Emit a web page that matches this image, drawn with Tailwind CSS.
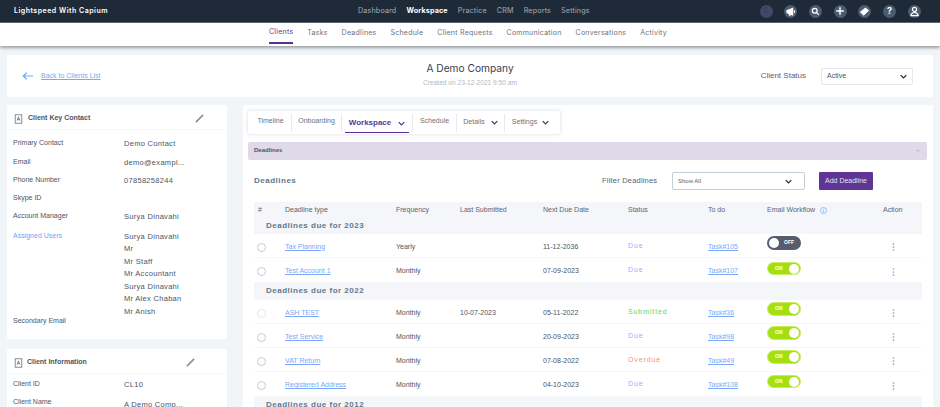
<!DOCTYPE html>
<html lang="en">
<head>
    <meta charset="UTF-8">
    <meta name="viewport" content="width=device-width, initial-scale=1.0">
    <title>Lightspeed With Capium</title>
    <script src="https://cdn.jsdelivr.net/npm/@tailwindcss/browser@4"></script>
</head>
<body class="h-[407px] w-[940px] overflow-hidden bg-[#f1f5f8] font-['Liberation_Sans',sans-serif] text-[7.5px] text-[#4b5563]">
    <!-- top bar -->
    <header class="relative flex h-[23px] items-center border-b border-[#5b6470] bg-[#1f2a38] font-['Inter',sans-serif]">
        <div class="ml-[14px] text-[7px] font-semibold tracking-[0.5px] text-white">Lightspeed With Capium</div>
        <nav class="absolute left-[358px] flex gap-[10px] text-[7.2px] tracking-[0.15px] text-[#a3abb6]">
            <span>Dashboard</span>
            <span class="font-bold text-white">Workspace</span>
            <span>Practice</span>
            <span>CRM</span>
            <span>Reports</span>
            <span>Settings</span>
        </nav>
        <div class="absolute left-[759.5px] flex gap-[11.7px]">
            <span class="flex size-[13px] items-center justify-center rounded-full bg-[#3f4a66] text-[7px] text-[#2f3650]">C</span>
            <span class="flex size-[13px] items-center justify-center rounded-full bg-[#4a5d70]">
                <svg viewBox="0 0 12 12" class="size-[11px]" fill="#fff"><path d="M1.500 4.500 9 1.500v9L1.500 7.500zM3.500 8l1.800-.2 1 2.700H4.500zM9.800 4.500H11v3H9.800z"/></svg>
            </span>
            <span class="flex size-[13px] items-center justify-center rounded-full bg-[#4a5d70]">
                <svg viewBox="0 0 12 12" class="size-[9px]" fill="none" stroke="#fff" stroke-width="1.7"><circle cx="5" cy="5" r="3.2"/><path d="m7.500 7.500 3 3"/></svg>
            </span>
            <span class="flex size-[13px] items-center justify-center rounded-full bg-[#4a5d70]">
                <svg viewBox="0 0 12 12" class="size-[10px]" stroke="#fff" stroke-width="1.8"><path d="M6 1.500v9M1.500 6h9"/></svg>
            </span>
            <span class="flex size-[13px] items-center justify-center rounded-full bg-[#4a5d70]">
                <svg viewBox="0 0 12 12" class="size-[11px]" fill="#fff"><path d="M1 6.500 7 1.500l4 3.500-6 5.500z"/></svg>
            </span>
            <span class="flex size-[13px] items-center justify-center rounded-full bg-[#4a5d70] text-[9px] font-bold text-white">?</span>
            <span class="flex size-[13px] items-center justify-center rounded-full bg-[#4a5d70]">
                <svg viewBox="0 0 12 12" class="size-[11px]" fill="none" stroke="#fff" stroke-width="1.300"><circle cx="6" cy="3.800" r="2.200"/><path d="M2 10.500c.4-2.400 2-3.400 4-3.400s3.600 1 4 3.400z"/></svg>
            </span>
        </div>
    </header>

    <!-- sub nav -->
    <nav class="flex h-[23px] gap-[13.9px] bg-white pl-[269px] font-['Inter',sans-serif] text-[7px] tracking-[0.25px] text-[#6b7280] shadow-[0_2px_3px_rgba(0,0,0,0.35)]">
        <span class="flex h-[21px] items-center border-b-2 border-[#5b2d90] text-[#5b3a90]">Clients</span>
        <span class="flex h-[21px] items-center pb-[1px]">Tasks</span>
        <span class="flex h-[21px] items-center pb-[1px]">Deadlines</span>
        <span class="flex h-[21px] items-center pb-[1px]">Schedule</span>
        <span class="flex h-[21px] items-center pb-[1px]">Client Requests</span>
        <span class="flex h-[21px] items-center pb-[1px]">Communication</span>
        <span class="flex h-[21px] items-center pb-[1px]">Conversations</span>
        <span class="flex h-[21px] items-center pb-[1px]">Activity</span>
    </nav>

    <main class="px-[7px] pt-[9px]">
        <!-- company header -->
        <section class="relative flex h-[42px] items-center rounded-[2px] bg-white">
            <a class="flex items-center gap-[7px] pl-[15px] text-[7px] text-[#7aa7f7] underline">
                <svg viewBox="0 0 14 10" class="h-[10px] w-[12px]" fill="none" stroke="#6ea5f8" stroke-width="1.400"><path d="M13 5H1.500M5.500 1 1.500 5l4 4"/></svg>
                Back to Clients List
            </a>
            <div class="absolute left-0 right-0 top-[6px] text-center">
                <div class="font-['Inter',sans-serif] text-[10.2px] leading-[14px] text-[#374151]">A Demo Company</div>
                <div class="mt-[3px] text-[6.6px] text-[#b4bac2]">Created on 23-12-2021 9:50 am</div>
            </div>
            <div class="ml-auto mr-[20px] flex items-center gap-[15px]">
                <span class="text-[8px] text-[#5b6470]">Client Status</span>
                <div class="flex h-[17px] w-[92px] items-center justify-between rounded-[2px] border border-[#e5e7eb] px-[5px] text-[7px]">
                    Active
                    <svg viewBox="0 0 10 6" class="h-[5px] w-[7px]" fill="none" stroke="#1f2937" stroke-width="1.800"><path d="m1 1 4 4 4-4"/></svg>
                </div>
            </div>
        </section>

        <div class="mt-[8px] flex gap-[16px]">
            <!-- left column -->
            <aside class="w-[220px] shrink-0">
                <section class="h-[234px] rounded-[2px] bg-white">
                    <div class="flex h-[25px] items-center border-b border-[#f5f6f8] pl-[7px] pr-[23px] pt-[3px]">
                        <svg viewBox="0 0 10 12" class="h-[10px] w-[9px]" fill="none" stroke="#4b5563" stroke-width="0.8"><rect x="1" y="1" width="8" height="10"/><path d="M3.300 8 5 3.500 6.700 8M4 6.500h2"/></svg>
                        <span class="ml-[5px] text-[7px] font-bold text-[#4b5563]">Client Key Contact</span>
                        <svg viewBox="0 0 10 10" class="ml-auto size-[9px]" fill="none" stroke="#8a9097" stroke-width="1.800"><path d="m1 9 8-8"/></svg>
                    </div>
                    <div class="grid grid-cols-[111px_1fr] pl-[6px] text-[7px]">
                        <div class="mt-[7.5px] h-[12px]">Primary Contact</div><div class="mt-[7.5px] text-[7.5px] tracking-[0.3px]">Demo Contact</div>
                        <div class="mt-[7px] h-[12px]">Email</div><div class="mt-[7px] text-[7.5px] tracking-[0.3px]">demo@exampl...</div>
                        <div class="mt-[6px] h-[12px]">Phone Number</div><div class="mt-[6px] text-[7.5px] tracking-[0.3px]">07858258244</div>
                        <div class="mt-[6px] h-[12px]">Skype ID</div><div class="mt-[6px]"></div>
                        <div class="mt-[6px] h-[12px]">Account Manager</div><div class="mt-[6px] text-[7.5px] tracking-[0.3px]">Surya Dinavahi</div>
                        <div class="mt-[8px] text-[#6ea5f8]">Assigned Users</div>
                        <div class="mt-[8px] text-[7.5px] leading-[12.6px] tracking-[0.3px]">
                            <div>Surya Dinavahi</div>
                            <div>Mr</div>
                            <div>Mr Staff</div>
                            <div>Mr Accountant</div>
                            <div>Surya Dinavahi</div>
                            <div>Mr Alex Chaban</div>
                            <div>Mr Anish</div>
                        </div>
                        <div class="col-span-2 -mt-[2.5px]">Secondary Email</div>
                    </div>
                </section>
                <section class="mt-[10px] h-[100px] rounded-[2px] bg-white">
                    <div class="flex h-[25px] items-center border-b border-[#f5f6f8] pl-[7px] pr-[32px] pt-[3px]">
                        <svg viewBox="0 0 10 12" class="h-[10px] w-[9px]" fill="none" stroke="#4b5563" stroke-width="0.8"><rect x="1" y="1" width="8" height="10"/><path d="M3.300 8 5 3.500 6.700 8M4 6.500h2"/></svg>
                        <span class="ml-[4px] text-[7px] font-bold text-[#4b5563]">Client Information</span>
                        <svg viewBox="0 0 10 10" class="ml-auto size-[9px]" fill="none" stroke="#8a9097" stroke-width="1.800"><path d="m1 9 8-8"/></svg>
                    </div>
                    <div class="grid grid-cols-[111px_1fr] pl-[6px] text-[7px]">
                        <div class="mt-[5px] h-[12px]">Client ID</div><div class="mt-[5px] text-[7.5px] tracking-[0.3px]">CL10</div>
                        <div class="mt-[6px]">Client Name</div><div class="mt-[8px] text-[7.5px] tracking-[0.3px]">A Demo Comp...</div>
                    </div>
                </section>
            </aside>

            <!-- right column -->
            <section class="h-[302px] w-[690px] shrink-0 rounded-[2px] bg-white pl-[5px] pr-[6px] pt-[6px]">
                <div class="flex h-[23px] w-[312px] items-center rounded-[2px] text-[7px] text-[#6b7280] shadow-[0_0_4px_rgba(0,0,0,0.15)]">
                    <span class="flex h-[18px] w-[44px] items-center justify-center border-r border-[#e8eaed] pb-[2px] pl-[2px]">Timeline</span>
                    <span class="flex h-[18px] w-[50px] items-center justify-center border-r border-[#e8eaed] pb-[2px]">Onboarding</span>
                    <span class="flex h-[18px] w-[71px] items-center justify-center border-r border-[#e8eaed]">
                        <span class="flex h-[20px] w-[64px] items-center justify-center gap-[7px] border-b border-[#5b2d90] pt-[2px] text-[8px] font-bold text-[#5b3a90]">Workspace
                            <svg viewBox="0 0 10 6" class="h-[5px] w-[7px]" fill="none" stroke="#5b2d90" stroke-width="1.800"><path d="m1 1 4 4 4-4"/></svg>
                        </span>
                    </span>
                    <span class="flex h-[18px] w-[44px] items-center justify-center border-r border-[#e8eaed] pb-[2px]">Schedule</span>
                    <span class="flex h-[18px] w-[48px] items-center justify-center gap-[6px] border-r border-[#e8eaed] pb-[1px]">Details
                        <svg viewBox="0 0 10 6" class="h-[5px] w-[7px]" fill="none" stroke="#374151" stroke-width="1.800"><path d="m1 1 4 4 4-4"/></svg>
                    </span>
                    <span class="flex h-[18px] w-[55px] items-center justify-center gap-[5px] pb-[1px] pr-[4px]">Settings
                        <svg viewBox="0 0 10 6" class="h-[5px] w-[7px]" fill="none" stroke="#374151" stroke-width="1.800"><path d="m1 1 4 4 4-4"/></svg>
                    </span>
                </div>

                <div class="mt-[8px] flex h-[18px] w-[679px] items-center justify-between rounded-[2px] bg-[#e0d9e9] pb-[1px] pl-[6px] pr-[7px] text-[6px] font-bold text-[#4b5563]">
                    Deadlines
                    <svg viewBox="0 0 10 6" class="h-[3px] w-[4px]" fill="none" stroke="#9ca3af" stroke-width="1.500"><path d="m1 1 4 4 4-4"/></svg>
                </div>

                <div class="flex h-[42px] items-center pl-[6px]">
                    <h2 class="w-[42px] whitespace-nowrap text-[8px] font-bold tracking-[0.5px] text-[#64788a]">Deadlines</h2>
                    <span class="ml-[306px] w-[55px] whitespace-nowrap text-[7.5px] tracking-[0.2px] text-[#5b6470]">Filter Deadlines</span>
                    <div class="ml-[15px] flex h-[18px] w-[133px] items-center justify-between rounded-[2px] border border-[#c3ced6] pl-[5px] pr-[12px] text-[6px] text-[#5b6470]">
                        Show All
                        <svg viewBox="0 0 10 6" class="h-[5px] w-[7px]" fill="none" stroke="#1f2937" stroke-width="1.800"><path d="m1 1 4 4 4-4"/></svg>
                    </div>
                    <button class="ml-[14px] h-[18px] w-[54px] rounded-[1px] bg-[#5f3595] text-[7px] text-[#e5e0f0]">Add Deadline</button>
                </div>

                <!-- deadlines table -->
                <div class="ml-[6px] w-[668px]">
                    <div class="grid h-[15px] grid-cols-[27px_111px_64px_83px_85px_80px_59px_116px_39px] items-center bg-[#f4f6fa] pl-[4px] pt-[1px] text-[7px] text-[#5b6470]">
                        <span>#</span><span>Deadline type</span><span>Frequency</span><span>Last Submitted</span><span>Next Due Date</span><span>Status</span><span>To do</span>
                        <span class="flex items-center gap-[5px] whitespace-nowrap">Email Workflow
                            <svg viewBox="0 0 10 10" class="size-[7px]" fill="none" stroke="#6ea5f8"><circle cx="5" cy="5" r="4.300"/><path d="M5 4.500V7.500M5 2.500v1"/></svg>
                        </span>
                        <span>Action</span>
                    </div>

                    <div class="flex h-[17px] items-center bg-[#f4f6fa] pl-[12px] text-[8px] font-bold tracking-[0.5px] text-[#64788a]">Deadlines due for 2023</div>

                    <div class="grid h-[24px] grid-cols-[27px_111px_64px_83px_85px_80px_59px_116px_39px] items-center border-b border-[#f5f6f8] pl-[4px] pt-[3px] text-[7px]">
                        <span class="-ml-[1px] size-[9px] rounded-full border border-[#c5c9ce]"></span>
                        <a class="text-[#7aa7f7] underline">Tax Planning</a><span>Yearly</span><span></span><span>11-12-2036</span>
                        <span class="-mt-[2px] tracking-[0.9px] text-[#8ab4ff]">Due</span>
                        <a class="text-[#7aa7f7] underline">Task#105</a>
                        <span class="relative -mt-[8px] flex h-[13.5px] w-[34px] items-center justify-end rounded-full bg-[#565e6b] pr-[7px] text-[5px] font-bold text-white"><span class="absolute left-[2px] size-[10px] rounded-full bg-white"></span>OFF</span>
                        <svg viewBox="0 0 4 12" class="ml-[9px] h-[8px] w-[3px]" fill="#9aa0a8"><circle cx="2" cy="1.500" r="1.300"/><circle cx="2" cy="6" r="1.300"/><circle cx="2" cy="10.500" r="1.300"/></svg>
                    </div>
                    <div class="grid h-[24px] grid-cols-[27px_111px_64px_83px_85px_80px_59px_116px_39px] items-center pl-[4px] pt-[3px] text-[7px]">
                        <span class="-ml-[1px] size-[9px] rounded-full border border-[#c5c9ce]"></span>
                        <a class="text-[#7aa7f7] underline">Test Account 1</a><span>Monthly</span><span></span><span>07-09-2023</span>
                        <span class="-mt-[2px] tracking-[0.9px] text-[#8ab4ff]">Due</span>
                        <a class="text-[#7aa7f7] underline">Task#107</a>
                        <span class="relative -mt-[6px] flex h-[13.5px] w-[34px] items-center rounded-full border border-[#c8ee66] bg-[#a4e00f] pl-[7px] text-[5px] font-bold text-white">ON<span class="absolute right-[1px] size-[10px] rounded-full bg-white"></span></span>
                        <svg viewBox="0 0 4 12" class="ml-[9px] h-[8px] w-[3px]" fill="#9aa0a8"><circle cx="2" cy="1.500" r="1.300"/><circle cx="2" cy="6" r="1.300"/><circle cx="2" cy="10.500" r="1.300"/></svg>
                    </div>

                    <div class="flex h-[18px] items-center bg-[#f4f6fa] pl-[12px] text-[8px] font-bold tracking-[0.5px] text-[#64788a]">Deadlines due for 2022</div>

                    <div class="grid h-[24px] grid-cols-[27px_111px_64px_83px_85px_80px_59px_116px_39px] items-center border-b border-[#f5f6f8] pl-[4px] pt-[3px] text-[7px]">
                        <span class="-ml-[1px] size-[9px] rounded-full border border-[#e5e7ea]"></span>
                        <a class="text-[#7aa7f7] underline">ASH TEST</a><span>Monthly</span><span>10-07-2023</span><span>05-11-2022</span>
                        <span class="-mt-[2px] tracking-[0.9px] text-[#6fcf5a]">Submitted</span>
                        <a class="text-[#7aa7f7] underline">Task#36</a>
                        <span class="relative -mt-[8px] flex h-[13.5px] w-[34px] items-center rounded-full border border-[#c8ee66] bg-[#a4e00f] pl-[7px] text-[5px] font-bold text-white">ON<span class="absolute right-[1px] size-[10px] rounded-full bg-white"></span></span>
                        <svg viewBox="0 0 4 12" class="ml-[9px] h-[8px] w-[3px]" fill="#9aa0a8"><circle cx="2" cy="1.500" r="1.300"/><circle cx="2" cy="6" r="1.300"/><circle cx="2" cy="10.500" r="1.300"/></svg>
                    </div>
                    <div class="grid h-[24px] grid-cols-[27px_111px_64px_83px_85px_80px_59px_116px_39px] items-center border-b border-[#f5f6f8] pl-[4px] pt-[3px] text-[7px]">
                        <span class="-ml-[1px] size-[9px] rounded-full border border-[#c5c9ce]"></span>
                        <a class="text-[#7aa7f7] underline">Test Service</a><span>Monthly</span><span></span><span>20-09-2023</span>
                        <span class="-mt-[2px] tracking-[0.9px] text-[#8ab4ff]">Due</span>
                        <a class="text-[#7aa7f7] underline">Task#98</a>
                        <span class="relative -mt-[8px] flex h-[13.5px] w-[34px] items-center rounded-full border border-[#c8ee66] bg-[#a4e00f] pl-[7px] text-[5px] font-bold text-white">ON<span class="absolute right-[1px] size-[10px] rounded-full bg-white"></span></span>
                        <svg viewBox="0 0 4 12" class="ml-[9px] h-[8px] w-[3px]" fill="#9aa0a8"><circle cx="2" cy="1.500" r="1.300"/><circle cx="2" cy="6" r="1.300"/><circle cx="2" cy="10.500" r="1.300"/></svg>
                    </div>
                    <div class="grid h-[24px] grid-cols-[27px_111px_64px_83px_85px_80px_59px_116px_39px] items-center border-b border-[#f5f6f8] pl-[4px] pt-[3px] text-[7px]">
                        <span class="-ml-[1px] size-[9px] rounded-full border border-[#c5c9ce]"></span>
                        <a class="text-[#7aa7f7] underline">VAT Return</a><span>Monthly</span><span></span><span>07-08-2022</span>
                        <span class="-mt-[2px] tracking-[0.9px] text-[#f58f80]">Overdue</span>
                        <a class="text-[#7aa7f7] underline">Task#49</a>
                        <span class="relative -mt-[8px] flex h-[13.5px] w-[34px] items-center rounded-full border border-[#c8ee66] bg-[#a4e00f] pl-[7px] text-[5px] font-bold text-white">ON<span class="absolute right-[1px] size-[10px] rounded-full bg-white"></span></span>
                        <svg viewBox="0 0 4 12" class="ml-[9px] h-[8px] w-[3px]" fill="#9aa0a8"><circle cx="2" cy="1.500" r="1.300"/><circle cx="2" cy="6" r="1.300"/><circle cx="2" cy="10.500" r="1.300"/></svg>
                    </div>
                    <div class="grid h-[24px] grid-cols-[27px_111px_64px_83px_85px_80px_59px_116px_39px] items-center pl-[4px] pt-[3px] text-[7px]">
                        <span class="-ml-[1px] size-[9px] rounded-full border border-[#c5c9ce]"></span>
                        <a class="text-[#7aa7f7] underline">Registered Address</a><span>Monthly</span><span></span><span>04-10-2023</span>
                        <span class="-mt-[2px] tracking-[0.9px] text-[#8ab4ff]">Due</span>
                        <a class="text-[#7aa7f7] underline">Task#108</a>
                        <span class="relative -mt-[8px] flex h-[13.5px] w-[34px] items-center rounded-full border border-[#c8ee66] bg-[#a4e00f] pl-[7px] text-[5px] font-bold text-white">ON<span class="absolute right-[1px] size-[10px] rounded-full bg-white"></span></span>
                        <svg viewBox="0 0 4 12" class="ml-[9px] h-[8px] w-[3px]" fill="#9aa0a8"><circle cx="2" cy="1.500" r="1.300"/><circle cx="2" cy="6" r="1.300"/><circle cx="2" cy="10.500" r="1.300"/></svg>
                    </div>

                    <div class="flex h-[18px] items-center bg-[#f4f6fa] pl-[12px] text-[8px] font-bold tracking-[0.5px] text-[#64788a]">Deadlines due for 2012</div>
                </div>
            </section>
        </div>
    </main>
</body>
</html>
